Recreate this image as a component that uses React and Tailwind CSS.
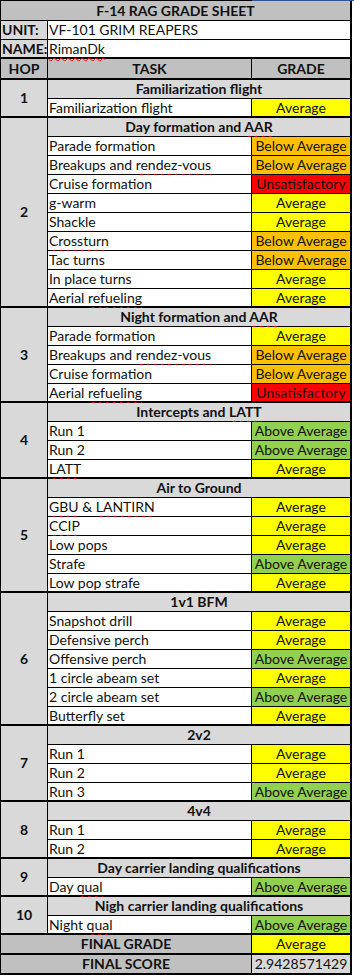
import React from "react";

const G = {
  A: ["Average", "bg-[#ffff00]"],
  B: ["Below Average", "bg-[#ffc000]"],
  U: ["Unsatisfactory", "bg-[#ff0000]"],
  G: ["Above Average", "bg-[#92d050]"],
};

const sections = [
  { hop: 1, title: "Familiarization flight", rows: [["Familiarization flight", "A"]] },
  {
    hop: 2,
    title: "Day formation and {AAR}",
    rows: [
      ["Parade formation", "B"],
      ["Breakups and {rendez-vous}", "B"],
      ["Cruise formation", "U"],
      ["g-warm", "A"],
      ["Shackle", "A"],
      ["{Crossturn}", "B"],
      ["Tac turns", "B"],
      ["In place turns", "A"],
      ["Aerial {refueling}", "A"],
    ],
  },
  {
    hop: 3,
    title: "Night formation and {AAR}",
    rows: [
      ["Parade formation", "A"],
      ["Breakups and {rendez-vous}", "B"],
      ["Cruise formation", "B"],
      ["Aerial {refueling}", "U"],
    ],
  },
  {
    hop: 4,
    title: "Intercepts and {LATT}",
    rows: [
      ["Run 1", "G"],
      ["Run 2", "G"],
      ["{LATT}", "A"],
    ],
  },
  {
    hop: 5,
    title: "Air to Ground",
    rows: [
      ["{GBU} & {LANTIRN}", "A"],
      ["{CCIP}", "A"],
      ["Low pops", "A"],
      ["Strafe", "G"],
      ["Low pop strafe", "A"],
    ],
  },
  {
    hop: 6,
    title: "1v1 BFM",
    rows: [
      ["Snapshot drill", "A"],
      ["Defensive perch", "A"],
      ["Offensive perch", "G"],
      ["1 circle abeam set", "A"],
      ["2 circle abeam set", "G"],
      ["Butterfly set", "A"],
    ],
  },
  {
    hop: 7,
    title: "2v2",
    rows: [
      ["Run 1", "A"],
      ["Run 2", "A"],
      ["Run 3", "G"],
    ],
  },
  {
    hop: 8,
    title: "4v4",
    rows: [
      ["Run 1", "A"],
      ["Run 2", "A"],
    ],
  },
  { hop: 9, title: "Day carrier landing qualifications", rows: [["Day {qual}", "G"]] },
  { hop: 10, title: "Nigh carrier landing qualifications", rows: [["Night {qual}", "G"]] },
];

function Txt({ s }) {
  const parts = s.split(/(\{[^}]*\})/);
  return (
    <>
      {parts.map((p, i) =>
        p.startsWith("{") ? (
          <span
            key={i}
            className="underline decoration-wavy decoration-[#ff0000] decoration-1 underline-offset-[3px]"
          >
            {p.slice(1, -1)}
          </span>
        ) : (
          <React.Fragment key={i}>{p}</React.Fragment>
        )
      )}
    </>
  );
}

function Section({ sec }) {
  return (
    <div className="flex border-b-2 border-black">
      <div className="w-[47px] shrink-0 border-r border-black bg-[#d9d9d9] flex items-center justify-center font-bold">
        {sec.hop}
      </div>
      <div className="flex-1 flex flex-col">
        <div className="h-[19px] border-b border-black bg-[#d9d9d9] flex items-center justify-center font-bold">
          <span>
            <Txt s={sec.title} />
          </span>
        </div>
        {sec.rows.map(([t, g], i) => {
          const last = i === sec.rows.length - 1;
          return (
            <div
              key={i}
              className={`flex ${last ? "h-[17px]" : "h-[19px] border-b border-black"}`}
            >
              <div className="w-[204px] shrink-0 border-r border-black bg-white flex items-center pl-[1px] whitespace-nowrap">
                <span>
                  <Txt s={t} />
                </span>
              </div>
              <div className={`flex-1 flex items-center justify-center ${G[g][1]}`}>
                {G[g][0]}
              </div>
            </div>
          );
        })}
      </div>
    </div>
  );
}

export default function App() {
  return (
    <div className="w-[354px] h-[975px] bg-white font-['Lato',sans-serif] text-[14px] leading-none text-[#111]">
      <div className="flex h-[1px]">
        <div className="w-[252px] bg-black" />
        <div className="flex-1 bg-[#2b579a]" />
      </div>
      <div className="w-[352px] border-l border-r-2 border-black">
        <div className="h-[20px] border-b border-black bg-[#c0c0c0] flex items-center justify-center font-bold">
          F-14 RAG GRADE SHEET
        </div>
        <div className="h-[19px] border-b border-black flex">
          <div className="w-[47px] shrink-0 border-r border-black bg-[#d9d9d9] flex items-center pl-[1px] font-bold">
            UNIT:
          </div>
          <div className="flex-1 bg-white flex items-center pl-[1px]">VF-101 GRIM REAPERS</div>
        </div>
        <div className="h-[19px] border-b-2 border-black flex">
          <div className="w-[47px] shrink-0 border-r border-black bg-[#d9d9d9] flex items-center pl-[1px] font-bold">
            NAME:
          </div>
          <div className="flex-1 bg-white flex items-center pl-[1px]">
            <span>
              <Txt s="{RimanDk}" />
            </span>
          </div>
        </div>
        <div className="h-[21px] border-b-2 border-black flex bg-[#c0c0c0] font-bold">
          <div className="w-[47px] shrink-0 border-r border-black flex items-center justify-center">HOP</div>
          <div className="w-[204px] shrink-0 border-r border-black flex items-center justify-center">TASK</div>
          <div className="flex-1 flex items-center justify-center">GRADE</div>
        </div>
        {sections.map((s) => (
          <Section key={s.hop} sec={s} />
        ))}
        <div className="h-[20px] border-b-2 border-black flex">
          <div className="w-[251px] shrink-0 border-r border-black bg-[#c0c0c0] flex items-center justify-center font-bold">
            FINAL GRADE
          </div>
          <div className="flex-1 bg-[#ffff00] flex items-center justify-center">Average</div>
        </div>
        <div className="h-[20px] border-b-2 border-black flex">
          <div className="w-[251px] shrink-0 border-r border-black bg-[#c0c0c0] flex items-center justify-center font-bold">
            FINAL SCORE
          </div>
          <div className="flex-1 bg-[#d9d9d9] flex items-center justify-center">2.9428571429</div>
        </div>
      </div>
    </div>
  );
}
